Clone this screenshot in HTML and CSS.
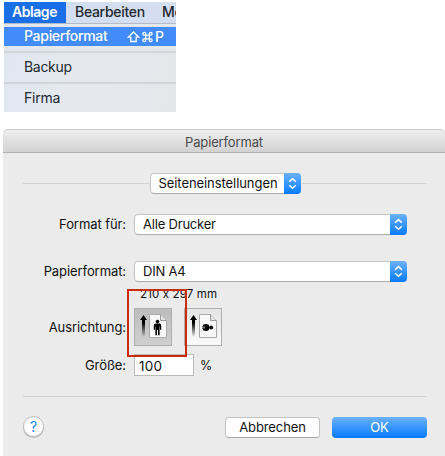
FILE: index.html
```html
<!DOCTYPE html>
<html lang="de">
<head>
<meta charset="utf-8">
<title>Papierformat</title>
<link rel="stylesheet" href="styles.css">
</head>
<body>
<nav class="menu">
  <div class="menubar">
    <span class="tab active">Ablage</span>
    <span class="tab edit">Bearbeiten</span>
    <span class="tab">Mo</span>
  </div>
  <div class="entry selected"><span class="entry-name">Papierformat</span>
    <span class="shortcut">
      <svg width="13" height="12" viewBox="0 0 13 12"><path d="M6.5 1 1.2 6.2h2.6v4.3h5.4V6.2h2.6z"/></svg>
      <svg width="11" height="12" viewBox="0 0 11 12"><path d="M3.7 4.2v3.6M7.3 4.2v3.6M3.7 4.2h3.6M3.7 7.8h3.6M3.7 4.2H2.3a1.4 1.4 0 1 1 1.4-1.4zM7.3 4.2h1.4a1.4 1.4 0 1 0-1.4-1.4zM3.7 7.8H2.3a1.4 1.4 0 1 0 1.4 1.4zM7.3 7.8h1.4a1.4 1.4 0 1 1-1.4 1.4z"/></svg>
      <span>P</span>
    </span>
  </div>
  <hr>
  <div class="entry backup">Backup</div>
  <hr>
  <div class="entry firma">Firma</div>
</nav>
<main class="dialog">
  <header class="title">Papierformat</header>
  <div class="section">
    <i class="rule"></i>
    <div class="popup section-popup"><span>Seiteneinstellungen</span><b class="arrows"><svg width="17" height="21" viewBox="0 0 17 21"><path d="m5.2 8.6 3.3-3 3.3 3M5.2 12.2l3.3 3 3.3-3"/></svg></b></div>
    <i class="rule"></i>
  </div>
  <div class="row format">
    <label>Format für:</label>
    <div class="popup"><span class="value">Alle Drucker</span><b class="arrows"><svg width="17" height="21" viewBox="0 0 17 21"><path d="m5.2 8.6 3.3-3 3.3 3M5.2 12.2l3.3 3 3.3-3"/></svg></b></div>
  </div>
  <div class="row paper">
    <label>Papierformat:</label>
    <div class="popup"><span class="value">DIN A4</span><b class="arrows"><svg width="17" height="21" viewBox="0 0 17 21"><path d="m5.2 8.6 3.3-3 3.3 3M5.2 12.2l3.3 3 3.3-3"/></svg></b></div>
  </div>
  <div class="dimensions">210 x 297 mm</div>
  <div class="row orientation">
    <label>Ausrichtung:</label>
    <div class="choices">
      <button class="orient pressed" aria-label="Hochformat">
        <svg width="36" height="36" viewBox="0 0 36 36">
          <defs>
            <linearGradient id="fade" x1="0" y1="0" x2="0" y2="1"><stop offset=".35" stop-color="#000"/><stop offset="1" stop-color="#000" stop-opacity="0"/></linearGradient>
          </defs>
          <path fill="url(#fade)" d="M8.5 6 12 11h-2v17H7V11H5z"/>
          <path class="sheet" d="M14.5 5.5h11l6 6v17h-17z"/><path class="fold" d="M25.5 5.5v6h6"/>
          <circle cx="22.5" cy="12.6" r="1.8"/><path d="M20.6 14.5h3.8q1.8 0 1.8 1.8v4.4H25v-3.2h-.4v8.8H23V21h-1v5.3h-1.6v-8.8H20v3.2h-1.2v-4.4q0-1.8 1.8-1.8z"/>
        </svg>
      </button>
      <button class="orient" aria-label="Querformat">
        <svg width="36" height="36" viewBox="0 0 36 36">
          <path fill="url(#fade)" d="M8.5 6 12 11h-2v17H7V11H5z"/>
          <path class="sheet" d="M14.5 5.5h11l6 6v17h-17z"/><path class="fold" d="M25.5 5.5v6h6"/>
          <circle cx="26.2" cy="18.5" r="1.9"/><path d="M24.5 17.5v2q-.6 2.2-2.8 2.5-1.9.2-3.7-.8v-1.1h2.5v-.4h-3.3v-.9h3v-.6h-3v-.9h3.3v-.4H18v-1.1q1.8-1 3.7-.8 2.2.3 2.8 2.5z"/>
        </svg>
      </button>
      <span class="highlight"></span>
    </div>
  </div>
  <div class="row scale">
    <label>Größe:</label>
    <div class="field">100</div><span class="percent">%</span>
  </div>
  <footer class="footer">
    <button class="help">?</button>
    <button class="btn">Abbrechen</button>
    <button class="btn ok">OK</button>
  </footer>
</main>
</body>
</html>
```
FILE: styles.css
```css
* { box-sizing: border-box; }
body { margin: 0; width: 445px; height: 456px; overflow: hidden; background: #fff; color: #111; font: 13px/21px Inter, "Liberation Sans", sans-serif; font-feature-settings: "calt" 0; }
button { margin: 0; padding: 0; font: inherit; }
svg { display: block; flex: none; }
.menu { width: 172px; height: 110px; margin: 2px 0 0 4px; overflow: hidden; background: linear-gradient(100deg, #dfe7f2, #e5e9ee 45%, #e4e7ea); color: #23282f; font-size: 14px; }
.menubar { display: flex; height: 22px; background: #d3dff0; border-bottom: 1px solid #b3bbc8; margin-bottom: 3px; font-weight: 500; letter-spacing: -.3px; line-height: 20px; }
.tab { flex: none; padding-left: 9px; white-space: nowrap; }
.active { width: 62px; padding-left: 8px; background: #1a6fe6; color: #fff; font-weight: 600; letter-spacing: -.45px; }
.edit { width: 87px; }
.entry { display: flex; padding-left: 20px; }
.selected { height: 19px; line-height: 18px; background: #418bfa; color: #fff; font-weight: 500; }
.entry-name { width: 103px; letter-spacing: -.3px; }
.shortcut { display: flex; align-items: center; gap: 2px; }
.shortcut svg { fill: none; stroke: #fff; stroke-width: 1.3; }
.menu hr { height: 2px; margin: 5px 0 0; border: 0; background: #d1d5da; }
.backup { height: 24px; line-height: 27px; letter-spacing: -.3px; }
.firma { height: 27px; line-height: 27px; letter-spacing: -.2px; }
.dialog { width: 442px; height: 327px; margin: 17px 0 0 3px; background: #ebebeb; border-radius: 5px 5px 0 0; }
.title { height: 24px; border-top: 1px solid #c8c8c8; border-bottom: 1px solid #b1b1b1; border-radius: 5px 5px 0 0; background: linear-gradient(#eee, #d2d2d2); color: #4b4b4b; text-align: center; line-height: 25px; letter-spacing: -.15px; }
.section { display: flex; align-items: center; gap: 1px; padding: 0 18px 0 20px; margin-top: 20px; height: 21px; }
.rule { flex: 1; height: 1px; background: #d2d2d2; }
.popup { display: flex; justify-content: space-between; width: 273px; height: 21px; padding-left: 8px; border: 1px solid #c4c4c4; border-right: 0; border-bottom-color: #aaa; border-radius: 4px; background: #fff; line-height: 19px; white-space: nowrap; }
.section-popup { width: 151px; letter-spacing: -.07px; }
.value { letter-spacing: -.2px; }
.arrows { width: 17px; height: 21px; margin-top: -1px; border-radius: 0 4px 4px 0; background: linear-gradient(#6bb2fb, #067bff); }
.arrows path { fill: none; stroke: #fff; stroke-width: 1.5; }
.row { display: flex; }
.row label { width: 123px; margin-right: 8px; text-align: right; white-space: nowrap; letter-spacing: -.08px; }
.format { margin-top: 20px; }
.paper { margin-top: 26px; }
.dimensions { height: 26px; padding: 3px 0 0 137px; font-size: 11.5px; line-height: 18px; letter-spacing: .15px; }
.orientation { height: 38px; }
.orientation label { line-height: 39px; }
.choices { position: relative; display: flex; gap: 12px; }
.orient { width: 38px; height: 38px; border: 1px solid #aeaeae; background: linear-gradient(#e4e4e4, #fafafa); }
.pressed { background: linear-gradient(#bdbdbd, #cfcfcf); }
.sheet { fill: #f8f8f8; stroke: #aaa; stroke-width: 1; }
.fold { fill: #e2e2e2; stroke: #999; }
.highlight { position: absolute; left: -7px; top: -19px; width: 60px; height: 68px; border: 2px solid #c82c0c; }
.scale { height: 22px; margin-top: 8px; line-height: 23px; }
.field { width: 60px; height: 22px; padding-left: 4px; border: 1px solid #bbb; background: #fff; font-size: 13.5px; line-height: 22px; letter-spacing: .2px; }
.percent { margin-left: 6px; font-size: 12.5px; }
.footer { display: flex; align-items: flex-start; margin: 20px 18px 0 20px; padding-top: 20px; border-top: 1px solid #d0d0d0; }
.help { width: 21px; height: 21px; margin: -1px 181px 0 0; border: 1px solid #bdbdbd; border-radius: 50%; background: #fff; box-shadow: 0 1px 0 #bbb; color: #1a80ff; font-size: 14px; line-height: 19px; }
.btn { width: 95px; height: 21px; border: 1px solid #c2c2c2; border-bottom-color: #a8a8a8; border-radius: 4px; background: #fff; color: #111; line-height: 19px; letter-spacing: -.1px; }
.ok { margin-left: 12px; border: 0; background: linear-gradient(#6bb2fb, #067bff); color: #fff; }
```
